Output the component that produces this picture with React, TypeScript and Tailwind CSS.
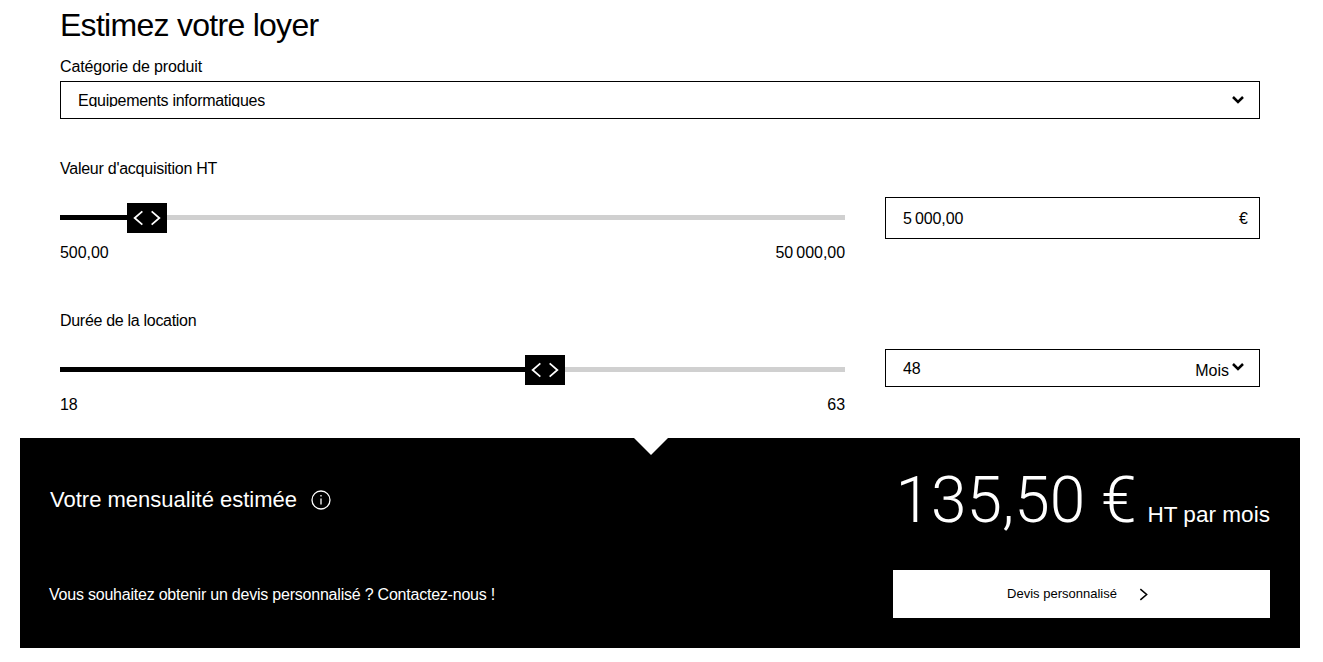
const sans = { fontFamily: '"Liberation Sans", Arial, sans-serif' }

function Chevron({ className, dir = "down", width = 2.5 }: { className?: string; dir?: "down" | "left" | "right"; width?: number }) {
  const points = dir === "down" ? "1,2 6,7 11,2" : dir === "left" ? "8.5,1 1.5,7 8.5,13" : "1.5,1 8.5,7 1.5,13"
  const box = dir === "down" ? "0 0 12 9" : "0 0 10 14"
  return (
    <svg viewBox={box} className={className} fill="none" stroke="currentColor" strokeWidth={width}>
      <polyline points={points} />
    </svg>
  )
}

function Slider({ handleLeft, min, max }: { handleLeft: number; min: string; max: string }) {
  return (
    <div className="w-[785px]">
      <div className="relative h-[30px] pt-[12px]">
        <div className="h-[5px] w-full bg-[#d0d0d0]">
          <div className="h-full bg-black" style={{ width: handleLeft }} />
        </div>
        <div
          className="absolute top-0 h-[30px] w-10 bg-black text-white flex items-center justify-center gap-[6px]"
          style={{ left: handleLeft }}
        >
          <Chevron dir="left" width={1.6} className="w-[11px] h-[16px]" />
          <Chevron dir="right" width={1.6} className="w-[11px] h-[16px]" />
        </div>
      </div>
      <div className="mt-[8px] flex justify-between text-base leading-6 tracking-[-0.05px] text-black">
        <span>{min}</span>
        <span>{max}</span>
      </div>
    </div>
  )
}

export default function App() {
  return (
    <div className="w-[1323px] h-[662px] bg-white overflow-hidden text-black" style={sans}>
      {/* --- FORM --- */}
      <div className="w-[1200px] ml-[60px]">
        <h1 className="pt-[6px] text-[32px] leading-[38px] tracking-[-0.72px]">Estimez votre loyer</h1>

        <label className="block mt-[11px] text-base leading-6 tracking-[-0.15px]">Catégorie de produit</label>
        <div className="mt-[2px] h-[38px] border border-black flex items-center justify-between pl-[17px] pr-[15px]">
          {/* descenders are cut off in the original select too */}
          <span className="block h-[14px] overflow-hidden text-base leading-[16px] tracking-[-0.28px] -mt-px">Equipements informatiques</span>
          <Chevron className="w-3 h-[9px] -mt-[2px]" />
        </div>

        <p className="mt-[38px] text-base leading-6 tracking-[-0.25px]">Valeur d'acquisition HT</p>
        <div className="mt-[22px] flex gap-10 items-start">
          <Slider handleLeft={67} min="500,00" max={"50\u2009000,00"} />
          <div className="-mt-[6px] w-[375px] h-[42px] border border-black flex items-center justify-between pl-[17px] pr-[11px] text-base">
            <span className="mt-px tracking-[-0.1px]">{"5\u2009000,00"}</span>
            <span className="mt-px">€</span>
          </div>
        </div>

        <p className="mt-[44px] text-base leading-6 tracking-[-0.3px]">Durée de la location</p>
        <div className="mt-[22px] flex gap-10 items-start">
          <Slider handleLeft={465} min="18" max="63" />
          <div className="-mt-[6px] w-[375px] h-[38px] border border-black flex items-center justify-between pl-[17px] pr-[15px] text-base">
            <span className="mt-px tracking-[-0.2px]">48</span>
            <div className="flex items-center gap-[3px]">
              <span className="mt-[5px]">Mois</span>
              <Chevron className="w-3 h-[9px] -mt-[3px]" />
            </div>
          </div>
        </div>
      </div>

      {/* --- RESULT PANEL --- */}
      <div className="relative mt-[21px] ml-5 w-[1280px] h-[210px] bg-black text-white pl-[29px] pr-[30px]">
        <svg viewBox="0 0 34 17" className="absolute top-0 left-[614px] w-[34px] h-[17px]">
          <polygon points="0,0 34,0 17,17" fill="#fff" />
        </svg>

        <div className="flex items-start justify-between pt-[28px]">
          <div className="flex items-center gap-[14px] ml-px mt-[17px]">
            <span className="text-[22px] leading-[34px]">Votre mensualité estimée</span>
            <svg viewBox="0 0 20 20" className="w-5 h-5" fill="none" stroke="currentColor" strokeWidth={1.3}>
              <circle cx="10" cy="10" r="9" />
              <path d="M10 8.5v6" />
              <path d="M10 5v1.6" />
            </svg>
          </div>
          <div className="flex items-baseline gap-[11px]">
            <span className="text-[64px] leading-[70px] font-light" style={{ fontFamily: 'Roboto, "Liberation Sans", sans-serif' }}>135,50 €</span>
            <span className="text-[22.6px]">HT par mois</span>
          </div>
        </div>

        <div className="flex items-center justify-between mt-[34px]">
          <span className="text-base tracking-[-0.22px] mt-[2px]">Vous souhaitez obtenir un devis personnalisé ? Contactez-nous !</span>
          <button className="w-[377px] h-12 bg-white text-black flex items-center justify-center gap-[22px] pr-[8px] text-[13px]">
            <span>Devis personnalisé</span>
            <Chevron dir="right" width={1.7} className="w-[9px] h-[13px]" />
          </button>
        </div>
      </div>
    </div>
  )
}
